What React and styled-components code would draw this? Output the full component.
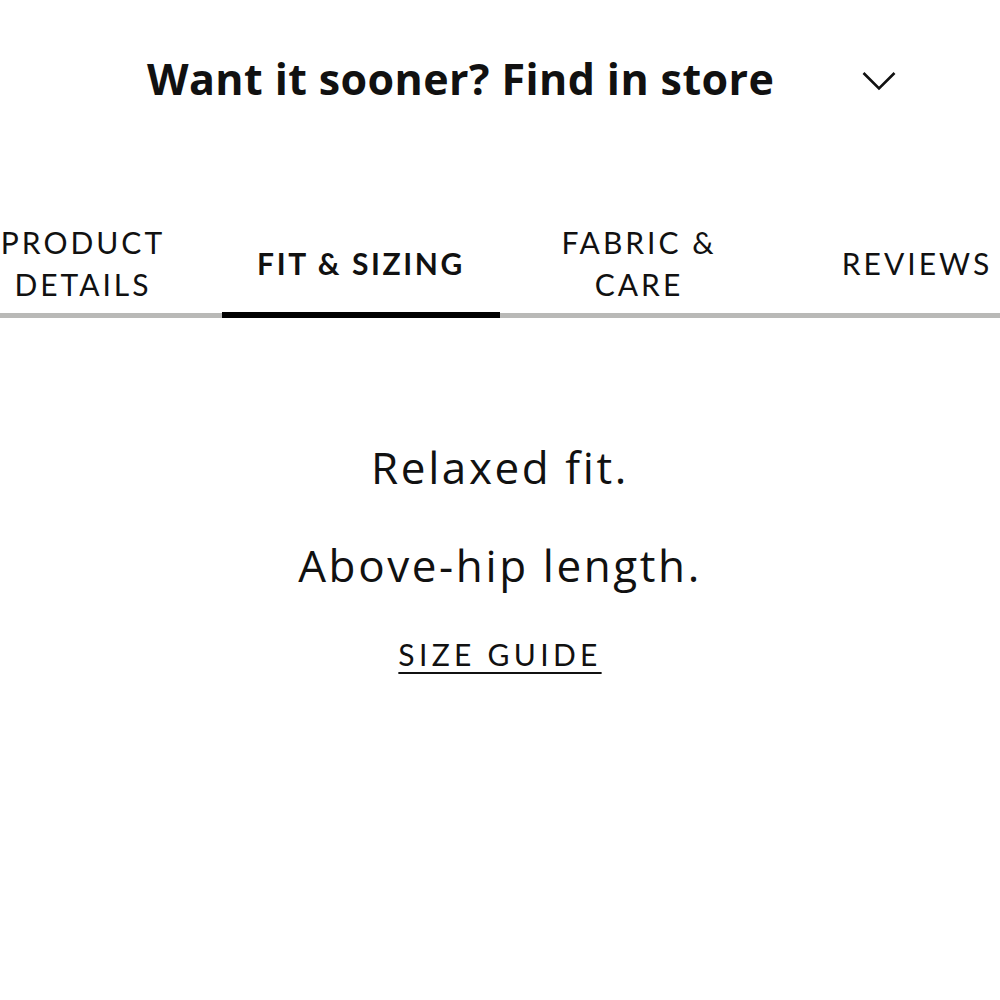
import React from 'react';
import { styled, createGlobalStyle } from 'styled-components';

const GlobalStyle = createGlobalStyle`
  html, body {
    margin: 0;
    padding: 0;
    background: #ffffff;
    color: #111111;
    font-family: Lato, 'Noto Sans', sans-serif;
  }
`;

const StylePage = styled.div`
  width: 1000px;
  height: 1000px;
  overflow: hidden;
  background: #ffffff;
`;

const StoreRow = styled.div`
  display: flex;
  align-items: center;
  justify-content: space-between;
  height: 156px;
  padding: 0 104px 0 147px;
  box-sizing: border-box;
  h2 {
    margin: 0;
    font-family: 'Open Sans', sans-serif;
    font-size: 43px;
    font-weight: 700;
    letter-spacing: 0.4px;
    color: #111111;
  }
  svg {
    margin-top: 6px;
  }
`;

const TabStrip = styled.div`
  position: relative;
  margin-top: 44px;
  border-bottom: 5px solid #b9b9b7;
`;

const TabList = styled.div`
  display: flex;
  margin-left: -56px;
`;

const Tab = styled.div`
  flex: 0 0 278px;
  height: 113px;
  padding-top: 12px;
  box-sizing: border-box;
  display: flex;
  align-items: center;
  justify-content: center;
  text-align: center;
  font-size: 30px;
  line-height: 42px;
  letter-spacing: ${(props) => (props.$active ? '2.6px' : '3px')};
  text-transform: uppercase;
  font-weight: ${(props) => (props.$active ? 700 : 400)};
  color: #111111;
  position: relative;
  &::after {
    content: '';
    display: ${(props) => (props.$active ? 'block' : 'none')};
    position: absolute;
    left: 0;
    right: 0;
    bottom: -5px;
    height: 6px;
    background: #000000;
  }
`;

const Panel = styled.div`
  display: flex;
  flex-direction: column;
  align-items: center;
  padding-top: 120px;
  p {
    margin: 0 0 40px;
    font-family: 'Open Sans', sans-serif;
    font-size: 44px;
    line-height: 58px;
    letter-spacing: 2.6px;
    color: #111111;
  }
`;

const GuideLink = styled.a`
  margin-top: 2px;
  font-size: 30px;
  letter-spacing: 4.3px;
  color: #111111;
  text-decoration: underline;
  text-underline-offset: 6px;
  text-decoration-thickness: 2px;
`;

const tabs = [
  { id: 'details', label: ['Product', 'Details'] },
  { id: 'fit', label: ['Fit & Sizing'] },
  { id: 'fabric', label: ['Fabric &', 'Care'] },
  { id: 'reviews', label: ['Reviews'] },
];

export default function App() {
  const active = 'fit';
  return (
    <StylePage>
      <GlobalStyle />
      <StoreRow>
        <h2>Want it sooner? Find in store</h2>
        <svg width="34" height="20" viewBox="0 0 34 20" fill="none">
          <path d="M1.5 2 L17 17.5 L32.5 2" stroke="#111" strokeWidth="2.6" />
        </svg>
      </StoreRow>
      <TabStrip>
        <TabList>
          {tabs.map((tab) => (
            <Tab key={tab.id} $active={tab.id === active}>
              <div>
                {tab.label.map((line) => (
                  <div key={line}>{line}</div>
                ))}
              </div>
            </Tab>
          ))}
        </TabList>
      </TabStrip>
      <Panel>
        <p>Relaxed fit.</p>
        <p>Above-hip length.</p>
        <GuideLink href="#">SIZE GUIDE</GuideLink>
      </Panel>
    </StylePage>
  );
}
